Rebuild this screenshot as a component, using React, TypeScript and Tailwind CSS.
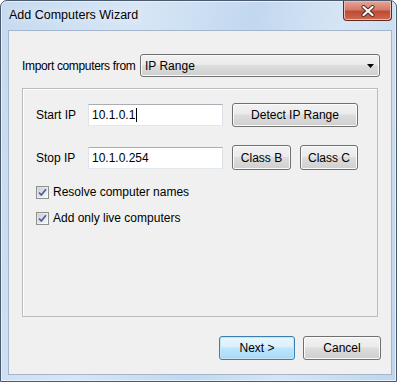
import React from 'react';

const Btn = ({ children, className = '', primary = false }: { children: React.ReactNode; className?: string; primary?: boolean }) => (
  <div
    className={`flex items-center justify-center whitespace-nowrap rounded-[3px] border text-[12px] text-black ${
      primary
        ? 'border-[#3c7fb1] bg-[linear-gradient(to_bottom,#eaf6fd_0%,#d9f0fc_45%,#bee6fd_50%,#a7d9f5_100%)] shadow-[inset_0_0_0_1px_#c4e5f6]'
        : 'border-[#707070] bg-[linear-gradient(to_bottom,#f2f2f2_0%,#ebebeb_45%,#dddddd_50%,#cfcfcf_100%)] shadow-[inset_0_0_0_1px_#fbfbfb]'
    } ${className}`}
  >
    {children}
  </div>
);

const TextBox = ({ value, caret = false }: { value: string; caret?: boolean }) => (
  <div className="flex h-[22px] w-[135px] items-center border border-[#abadb3] border-b-[#e3e9ef] border-l-[#e2e3ea] border-r-[#dbdfe6] bg-white pl-[3px] text-[12px] text-black">
    <span>{value}</span>
    {caret && <span className="ml-[1px] h-[14px] w-[1px] bg-black" />}
  </div>
);

const Check = ({ label }: { label: string }) => (
  <div className="flex items-center gap-[4px]">
    <div className="flex h-[13px] w-[13px] items-center justify-center border border-[#8e8f8f] bg-[linear-gradient(135deg,#dcdcdc,#ffffff)]">
      <div className="flex h-[9px] w-[9px] items-center justify-center bg-[linear-gradient(135deg,#cbcfd5,#f6f6f6)]">
        <svg width="9" height="9" viewBox="0 0 9 9">
          <path d="M1 4.5 L3.3 7 L8 1.2" fill="none" stroke="#4a5f97" strokeWidth="1.7" strokeLinejoin="round" />
        </svg>
      </div>
    </div>
    <span className="text-[12px] text-black">{label}</span>
  </div>
);

export default function App() {
  return (
    <div className="h-[383px] w-[400px] bg-white font-['Liberation_Sans',Arial,sans-serif]">
      <div className="relative flex h-[382px] w-[397px] flex-col rounded-t-[7px] border border-[#4b5a6c] bg-[linear-gradient(100deg,#c5daef_0%,#d7e6f6_30%,#c2d8ef_55%,#d6e5f5_75%,#bfd5ec_100%)] pl-[7px] pr-[4px] pb-[6px] shadow-[inset_0_0_0_1px_#e6f0fa]">
        <div className="flex h-[29px] items-center pl-[1px] text-[12.5px] text-black [text-shadow:0_0_8px_#ffffff]">
          Add Computers Wizard
        </div>
        <div className="absolute right-[4px] top-0 flex h-[20px] w-[49px] items-center justify-center rounded-b-[4px] border border-t-0 border-[#5b2a22] bg-[linear-gradient(to_bottom,#e6a596_0%,#d47c6a_45%,#c24a33_55%,#cb6a4d_100%)] shadow-[inset_0_0_0_1px_#efb9ab]">
          <svg width="14" height="12" viewBox="0 0 14 12">
            <path d="M2.5 2 L11.5 10 M11.5 2 L2.5 10" stroke="#4a2a24" strokeWidth="4" strokeLinecap="round" />
            <path d="M2.5 2 L11.5 10 M11.5 2 L2.5 10" stroke="#ffffff" strokeWidth="2.2" strokeLinecap="round" />
          </svg>
        </div>
        <div className="flex flex-1 flex-col border border-[#a3b6cb] bg-[#f0f0f0] text-[12px] text-black">
          <div className="mt-[23px] flex h-[23px] items-center pl-[13px] pr-[11px]">
            <span className="w-[118px] shrink-0 whitespace-nowrap tracking-[-0.35px]">Import computers from</span>
            <div className="flex h-[23px] flex-1 items-center justify-between rounded-[3px] border border-[#707070] bg-[linear-gradient(to_bottom,#f2f2f2_0%,#ebebeb_45%,#dddddd_50%,#cfcfcf_100%)] pl-[4px] pr-[5px] shadow-[inset_0_0_0_1px_#fbfbfb]">
              <span>IP Range</span>
              <svg width="7" height="4" viewBox="0 0 7 4">
                <path d="M0 0 H7 L3.5 4 Z" fill="#000" />
              </svg>
            </div>
          </div>
          <div className="ml-[13px] mt-[11px] flex h-[229px] w-[356px] flex-col border border-[#bcbcbc] pl-[13px] shadow-[inset_1px_1px_0_#ffffff]">
            <div className="mt-[14px] flex items-center">
              <span className="w-[52px]">Start IP</span>
              <TextBox value="10.1.0.1" caret />
              <Btn className="ml-[9px] h-[24px] w-[126px]">Detect IP Range</Btn>
            </div>
            <div className="mt-[18px] flex items-center">
              <span className="w-[52px]">Stop IP</span>
              <TextBox value="10.1.0.254" />
              <Btn className="ml-[9px] h-[25px] w-[59px]">Class B</Btn>
              <Btn className="ml-[9px] h-[25px] w-[58px]">Class C</Btn>
            </div>
            <div className="mt-[13px]">
              <Check label="Resolve computer names" />
            </div>
            <div className="mt-[8px]">
              <Check label="Add only live computers" />
            </div>
          </div>
          <div className="mt-[19px] flex justify-end gap-[8px] pr-[10px]">
            <Btn primary className="h-[24px] w-[76px]">Next &gt;</Btn>
            <Btn className="h-[24px] w-[78px]">Cancel</Btn>
          </div>
        </div>
      </div>
    </div>
  );
}
